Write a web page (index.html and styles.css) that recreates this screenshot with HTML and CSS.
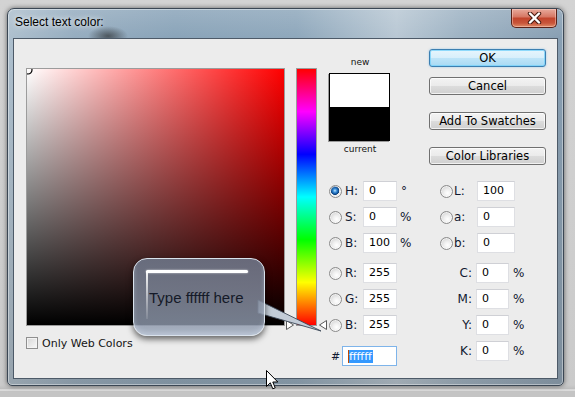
FILE: index.html
```html
<!DOCTYPE html>
<html>
<head>
<meta charset="utf-8">
<title>Select text color</title>
<link rel="stylesheet" href="styles.css">
</head>
<body>
<div class="window">
  <div class="titlebar">
    <span class="title">Select text color:</span>
    <div class="close">
      <svg width="15" height="12" viewBox="0 0 15 12"><path d="M3 1.5 L12 10.5 M12 1.5 L3 10.5" stroke="#4a1c12" stroke-width="4.4" stroke-linecap="round"/><path d="M3 1.5 L12 10.5 M12 1.5 L3 10.5" stroke="#ffffff" stroke-width="2.4" stroke-linecap="round"/></svg>
    </div>
  </div>
  <div class="client">
    <div class="col-field">
      <div class="field">
        <svg class="marker" width="10" height="10" viewBox="0 0 10 10"><circle cx="1" cy="1" r="4" fill="none" stroke="#000" stroke-width="1.2"/></svg>
      </div>
      <div class="webcolors"><span class="checkbox"></span><span>Only Web Colors</span></div>
    </div>
    <div class="col-hue">
      <div class="hue"></div>
      <svg class="tri tri-l" width="9" height="10" viewBox="0 0 9 10"><path d="M0.5 0.5 L7.5 5 L0.5 9.5 Z" fill="#fff" stroke="#5a5a5a"/></svg>
      <svg class="tri tri-r" width="9" height="10" viewBox="0 0 9 10"><path d="M8.5 0.5 L1.5 5 L8.5 9.5 Z" fill="#fff" stroke="#5a5a5a"/></svg>
    </div>
    <div class="col-right">
      <div class="top">
        <div class="swatch-block">
          <div class="sw-label">new</div>
          <div class="swatch"><div class="sw-new"></div><div class="sw-cur"></div></div>
          <div class="sw-label sw-cur-label">current</div>
        </div>
        <div class="buttons">
          <div class="btn btn-ok">OK</div>
          <div class="btn btn-cancel">Cancel</div>
          <div class="btn">Add To Swatches</div>
          <div class="btn">Color Libraries</div>
        </div>
      </div>
      <div class="fields">
        <div class="group-l">
          <div class="row"><span class="radio on"></span><span class="lbl">H:</span><span class="inp">0</span><span class="unit deg">°</span></div>
          <div class="row"><span class="radio"></span><span class="lbl">S:</span><span class="inp">0</span><span class="unit">%</span></div>
          <div class="row gap"><span class="radio"></span><span class="lbl">B:</span><span class="inp">100</span><span class="unit">%</span></div>
          <div class="row"><span class="radio"></span><span class="lbl">R:</span><span class="inp">255</span></div>
          <div class="row"><span class="radio"></span><span class="lbl">G:</span><span class="inp">255</span></div>
          <div class="row gap-hex"><span class="radio"></span><span class="lbl">B:</span><span class="inp">255</span></div>
          <div class="row"><span class="hash">#</span><span class="inp hex"><span class="caret"></span><span class="sel">ffffff</span></span></div>
        </div>
        <div class="group-r">
          <div class="row"><span class="radio"></span><span class="lbl2">L:</span><span class="inp inp-lab">100</span></div>
          <div class="row"><span class="radio"></span><span class="lbl2">a:</span><span class="inp inp-lab">0</span></div>
          <div class="row gap"><span class="radio"></span><span class="lbl2">b:</span><span class="inp inp-lab">0</span></div>
          <div class="row"><span class="clbl">C:</span><span class="inp inp-cmyk">0</span><span class="unit2">%</span></div>
          <div class="row"><span class="clbl">M:</span><span class="inp inp-cmyk">0</span><span class="unit2">%</span></div>
          <div class="row"><span class="clbl">Y:</span><span class="inp inp-cmyk">0</span><span class="unit2">%</span></div>
          <div class="row"><span class="clbl">K:</span><span class="inp inp-cmyk">0</span><span class="unit2">%</span></div>
        </div>
      </div>
    </div>
    <svg class="overlay" width="543" height="339" viewBox="14 39 543 339">
      <path d="M258 300 L321 331 L258 313 Z" fill="#c3ccd7" stroke="#3c4858" stroke-width="0.9" stroke-linejoin="round"/>
    </svg>
    <div class="callout"><span class="callout-text">Type ffffff here</span></div>
    <svg class="cursor" width="13" height="21" viewBox="0 0 13 21"><path d="M0.5 0.5 L0.5 16.5 L4.3 12.8 L6.8 18.8 L9.2 17.8 L6.8 12 L11.8 12 Z" fill="#fff" stroke="#000" stroke-width="1" stroke-linejoin="miter"/></svg>
  </div>
</div>
</body>
</html>
```

FILE: styles.css
```css
html, body {
  margin: 0;
  padding: 0;
}
body {
  width: 575px;
  height: 397px;
  overflow: hidden;
  background: linear-gradient(to bottom, #d3d3d3 0, #cacaca 385px, #bdbdbd 389px, #f2f2f2 390px, #c4c4c4 391px, #c4c4c4 100%);
  font-family: "DejaVu Sans", sans-serif;
}
.window {
  margin: 8px 0 0 7px;
  width: 557px;
  height: 378px;
  box-sizing: border-box;
  border: 1px solid #3b4754;
  border-radius: 7px 7px 5px 5px;
  background:
    radial-gradient(ellipse 20px 10px at 100px 27px, rgba(30, 30, 30, 0.6), rgba(30, 30, 30, 0) 100%),
    linear-gradient(to bottom, rgba(255, 255, 255, 0.15) 0, rgba(255, 255, 255, 0) 28px, rgba(100, 100, 100, 0.3) 100%),
    linear-gradient(to right, #aec0ce 0%, #96adc0 12%, #8aa4b9 30%, #8fa8bc 52%, #b9c8d4 70%, #9db2c3 82%, #889fb3 100%);
  box-shadow: 0 0 5px rgba(0, 0, 0, 0.55), inset 0 0 0 1px rgba(255, 255, 255, 0.4);
  display: flex;
  flex-direction: column;
}
.titlebar {
  height: 29px;
  display: flex;
  justify-content: space-between;
  align-items: flex-start;
}
.title {
  margin: 6px 0 0 7px;
  font-family: "Liberation Sans", Arial, sans-serif;
  font-size: 12px;
  line-height: 14px;
  color: #000;
  text-shadow: 0 0 5px rgba(255, 255, 255, 0.9), 0 0 9px rgba(255, 255, 255, 0.6);
}
.close {
  margin-right: 6px;
  width: 46px;
  height: 19px;
  box-sizing: border-box;
  border: 1px solid #5a2218;
  border-top: none;
  border-radius: 0 0 5px 5px;
  background: linear-gradient(to bottom, #e8aa9c 0%, #d77966 42%, #c2452d 52%, #c8553a 78%, #df8d68 100%);
  box-shadow: inset 0 0 0 1px rgba(255, 220, 210, 0.45);
  display: flex;
  align-items: center;
  justify-content: center;
}
.client {
  margin: 0 5px;
  width: 545px;
  height: 341px;
  box-sizing: border-box;
  border: 1px solid #4d5a68;
  background: #ececec;
  position: relative;
  display: flex;
  align-items: flex-start;
}
.col-field {
  margin: 29px 0 0 12px;
  width: 259px;
}
.field {
  position: relative;
  width: 259px;
  height: 258px;
  box-sizing: border-box;
  border: 1px solid #9c9c9c;
  overflow: hidden;
  background:
    linear-gradient(to bottom, rgba(0, 0, 0, 0), #000),
    linear-gradient(to right, #fff, #f00);
}
.marker {
  position: absolute;
  left: 0;
  top: 0;
}
.webcolors {
  margin-top: 11px;
  display: flex;
  align-items: center;
  height: 12px;
  font-size: 11px;
  color: #141414;
}
.checkbox {
  width: 12px;
  height: 12px;
  box-sizing: border-box;
  border: 1px solid #8f8f8f;
  background: linear-gradient(135deg, #d6d6d6, #f8f8f8);
  box-shadow: inset 0 0 0 1px #f3f3f3;
  margin-right: 4px;
}
.col-hue {
  position: relative;
  margin-top: 29px;
  width: 43px;
  height: 258px;
}
.hue {
  margin-left: 11px;
  width: 21px;
  height: 258px;
  box-sizing: border-box;
  border: 1px solid #9c9c9c;
  background: linear-gradient(to bottom, #f00 0%, #f0f 16.67%, #00f 33.33%, #0ff 50%, #0f0 66.67%, #ff0 83.33%, #f00 100%);
}
.tri {
  position: absolute;
  top: 252px;
}
.tri-l { left: 1px; }
.tri-r { left: 33px; }
.col-right {
  margin-top: 10px;
  width: 229px;
}
.top {
  display: flex;
  align-items: flex-start;
}
.swatch-block {
  width: 64px;
  margin-top: 7px;
}
.sw-label {
  font-size: 9px;
  line-height: 12px;
  text-align: center;
  color: #141414;
}
.swatch {
  margin: 5px 0 0 1px;
  width: 61px;
  height: 68px;
  box-sizing: border-box;
  border: 1px solid #000;
  box-shadow: -1px 1px 0 #9a9a9a;
  display: flex;
  flex-direction: column;
}
.sw-new { height: 33px; background: #fff; }
.sw-cur { flex: 1; background: #000; }
.sw-cur-label { margin-top: 2px; }
.buttons {
  margin-left: 37px;
  width: 117px;
  display: flex;
  flex-direction: column;
}
.btn {
  height: 18px;
  box-sizing: border-box;
  border: 1px solid #707070;
  border-radius: 3px;
  background: linear-gradient(to bottom, #f3f3f3 0%, #ebebeb 48%, #dcdcdc 52%, #cfcfcf 100%);
  box-shadow: inset 0 0 0 1px rgba(255, 255, 255, 0.7);
  font-size: 11.5px;
  line-height: 16px;
  text-align: center;
  color: #000;
  margin-bottom: 17px;
}
.btn:last-child { margin-bottom: 0; }
.btn-ok {
  margin-bottom: 10px;
  border-color: #3c7fb1;
  background: linear-gradient(to bottom, #e6f5fd 0%, #d8effb 48%, #bde4f8 52%, #a9daf4 100%);
  box-shadow: inset 0 0 0 1px rgba(120, 210, 250, 0.8), 0 0 2px rgba(60, 160, 230, 0.5);
}
.fields {
  margin-top: 16px;
  display: flex;
}
.group-l {
  margin-left: 1px;
  width: 111px;
}
.group-r {
  width: 100px;
}
.row {
  display: flex;
  align-items: center;
  height: 20px;
  margin-bottom: 6px;
  font-size: 12px;
  color: #101830;
}
.row.gap { margin-bottom: 10px; }
.row.gap-hex { margin-bottom: 11px; }
.row:last-child { margin-bottom: 0; }
.radio {
  width: 13px;
  height: 13px;
  box-sizing: border-box;
  border-radius: 50%;
  border: 1px solid #8b8b8b;
  background: radial-gradient(circle at 60% 65%, #ffffff 0, #f0f0f0 35%, #cdcdcd 90%);
  box-shadow: inset 0 0 0 1px rgba(255, 255, 255, 0.6);
  flex: none;
}
.radio.on {
  background: radial-gradient(circle at 45% 42%, #c8e8ff 0, #4a9be0 1.5px, #125aa6 3.2px, #0d3f78 4px, #eeeeee 4.6px, #d0d0d0 100%);
}
.lbl {
  width: 18px;
  margin-left: 3px;
}
.lbl2 {
  width: 23px;
  padding-left: 1px;
}
.clbl {
  width: 32px;
  text-align: right;
}
.inp {
  width: 34px;
  height: 20px;
  box-sizing: border-box;
  background: #fff;
  border: 1px solid #dedfe3;
  border-top-color: #cfd0d5;
  padding-left: 5px;
  font-size: 11px;
  line-height: 18px;
  color: #000;
  flex: none;
}
.inp-lab { width: 38px; }
.inp-cmyk { width: 33px; margin-left: 4px; }
.unit {
  margin-left: 3px;
  font-size: 12px;
}
.deg { margin-left: 4px; }
.unit2 {
  margin-left: 4px;
  font-size: 12px;
}
.hash {
  width: 11px;
  padding-left: 2px;
  font-size: 11px;
}
.inp.hex {
  width: 55px;
  border: 1px solid #7eb4ea;
  display: flex;
  align-items: center;
}
.caret {
  width: 1px;
  height: 13px;
  background: #c04a00;
}
.sel {
  background: #3399ff;
  color: #fff;
  line-height: 13px;
  height: 13px;
  padding-right: 1px;
}
.overlay {
  position: absolute;
  left: 0;
  top: 0;
  pointer-events: none;
}
.callout {
  position: absolute;
  left: 119px;
  top: 219px;
  width: 132px;
  height: 78px;
  box-sizing: border-box;
  border: 1px solid #d9e2ec;
  border-radius: 14px;
  background: linear-gradient(to bottom, rgba(108, 116, 134, 0.9) 0%, rgba(128, 137, 155, 0.85) 55%, rgba(150, 162, 182, 0.8) 100%);
  box-shadow: 0 3px 6px rgba(0, 0, 0, 0.6), inset 0 -3px 4px rgba(220, 232, 245, 0.35);
  padding: 29px 0 0 15px;
}
.callout::before {
  content: "";
  position: absolute;
  left: 12px;
  top: 11px;
  width: 102px;
  height: 3px;
  border-radius: 2px;
  background: #fff;
  box-shadow: 0 0 2px rgba(255, 255, 255, 0.8);
}
.callout::after {
  content: "";
  position: absolute;
  left: 12px;
  top: 12px;
  width: 2px;
  height: 48px;
  background: linear-gradient(to bottom, rgba(255, 255, 255, 0.95), rgba(255, 255, 255, 0.1));
}
.callout-text {
  font-family: "Liberation Sans", Arial, sans-serif;
  font-size: 15px;
  line-height: 18px;
  color: #151a28;
  white-space: nowrap;
}
.cursor {
  position: absolute;
  left: 252px;
  top: 331px;
}
```
